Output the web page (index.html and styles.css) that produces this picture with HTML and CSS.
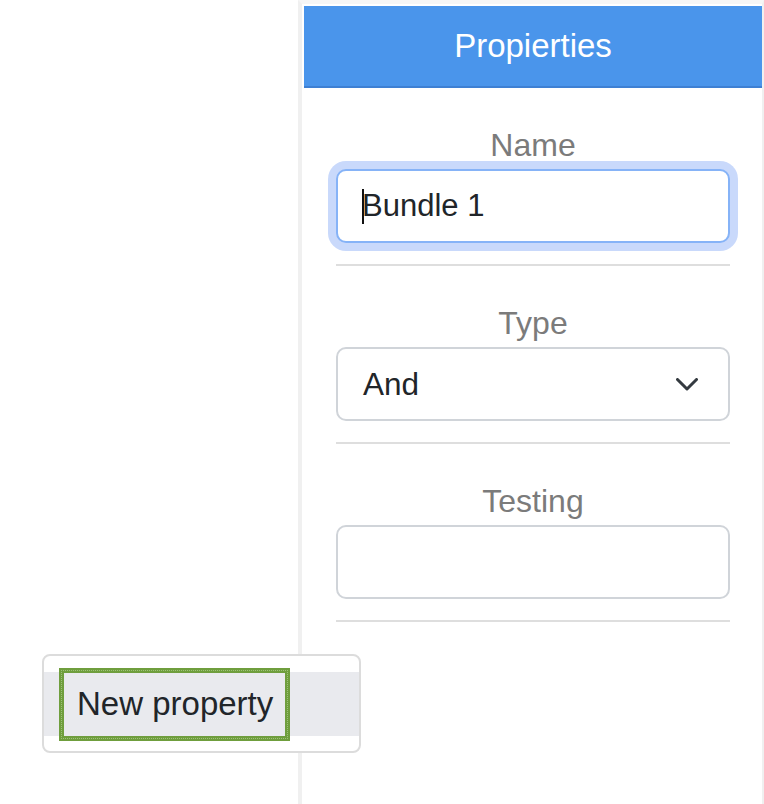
FILE: index.html
```html
<!DOCTYPE html>
<html lang="en">
<head>
<meta charset="utf-8">
<title>Propierties</title>
<link rel="stylesheet" href="styles.css">
</head>
<body>
<div class="app">
  <div class="canvas">
    <div class="menu">
      <div class="menu-item"><span class="menu-label">New property</span></div>
    </div>
  </div>
  <aside class="panel">
    <header class="panel-header">Propierties</header>
    <form class="props">
      <div class="field">
        <label class="field-label">Name</label>
        <div class="control focused"><span class="caret"></span>Bundle 1</div>
      </div>
      <hr class="divider">
      <div class="field">
        <label class="field-label">Type</label>
        <div class="control select"><span>And</span>
          <svg class="chevron" width="22" height="13" viewBox="0 0 22 13"><polyline points="1.5,1.5 11,11 20.5,1.5" fill="none" stroke="#343a40" stroke-width="3" stroke-linecap="round" stroke-linejoin="round"/></svg>
        </div>
      </div>
      <hr class="divider">
      <div class="field">
        <label class="field-label">Testing</label>
        <div class="control"></div>
      </div>
      <hr class="divider">
    </form>
  </aside>
</div>
</body>
</html>
```
FILE: styles.css
```css
* { box-sizing: border-box; }
html, body { margin: 0; padding: 0; background: #fff; }
body {
  font-family: "Liberation Sans", Arial, Helvetica, sans-serif;
  color: #212529;
}
.app {
  display: flex;
  height: 804px;
  overflow: hidden;
}
.canvas {
  position: relative;
  width: 298px;
  flex: none;
}
.menu {
  position: absolute;
  left: 42px;
  top: 654px;
  width: 319px;
  height: 99px;
  background: #fff;
  border: 2px solid #dcdcdc;
  border-radius: 8px;
  padding-top: 16px;
  z-index: 2;
}
.menu-item {
  height: 64px;
  background: #e9eaee;
  display: flex;
  align-items: center;
  padding-left: 15px;
}
.menu-label {
  display: inline-flex;
  align-items: center;
  height: 73px;
  width: 231px;
  padding: 0 0 0 13px;
  border: 5px solid #6f9e3d;
  outline: 1px dotted #9fc27a;
  outline-offset: -3px;
  font-size: 33px;
  color: #212529;
  flex: none;
}
.panel {
  flex: 1;
  border-left: 4px solid #f0f0f0;
  border-top: 4px solid #f6f6f6;
  border-right: 2px solid #f0f0f0;
  padding: 2px 0 0 2px;
}
.panel-header {
  height: 82px;
  background: #4a95eb;
  border-bottom: 2px solid #3e80d3;
  color: #fff;
  font-size: 33px;
  display: flex;
  align-items: center;
  justify-content: center;
}
.props {
  padding: 0 32px;
}
.field {
  padding-top: 39px;
  display: flex;
  flex-direction: column;
}
.field-label {
  font-size: 32px;
  line-height: 36px;
  color: #7b7b7b;
  text-align: center;
  margin-bottom: 6px;
}
.control {
  height: 74px;
  border: 2px solid #d0d4d9;
  border-radius: 10px;
  background: #fff;
  font-size: 31px;
  color: #212529;
  display: flex;
  align-items: center;
  padding: 0 30px 0 25px;
}
.control.focused {
  border-color: #86b3f7;
  box-shadow: 0 0 0 8px #c9d9fb;
  padding-left: 24px;
}
.caret {
  display: inline-block;
  width: 2px;
  height: 35px;
  background: #111;
  margin-right: -2px;
}
.select {
  justify-content: space-between;
  font-size: 31.5px;
}
.chevron { display: block; }
.divider {
  border: 0;
  height: 2px;
  background: #dedede;
  margin: 21px 0 0;
}
```
